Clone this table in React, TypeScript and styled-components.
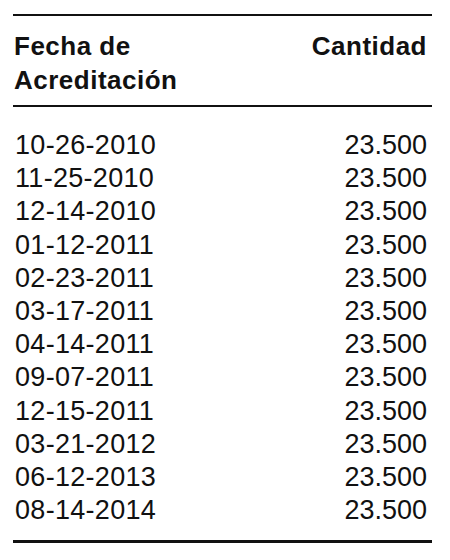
import React from "react";
import styled, { createGlobalStyle } from "styled-components";

const Global = createGlobalStyle`
  html, body { margin: 0; padding: 0; background: #fff; }
  body { font-family: "Liberation Sans", Arial, Helvetica, sans-serif; color: #111; }
`;

const Page = styled.div`
  width: 450px;
  height: 560px;
  padding: 14px 18px 0 13px;
  box-sizing: border-box;
`;

const Table = styled.div`
  border-top: 2px solid #111;
  border-bottom: 3px solid #111;
  width: 419px;
`;

const Header = styled.div`
  display: flex;
  justify-content: space-between;
  align-items: flex-start;
  padding: 13px 5px 8px 1px;
  border-bottom: 2px solid #111;
  font-weight: 700;
  font-size: 26px;
  line-height: 34px;
  letter-spacing: 0.5px;
`;

const HeadCell = styled.div<{ $right?: boolean }>`
  text-align: ${(p) => (p.$right ? "right" : "left")};
`;

const Body = styled.div`
  padding: 22px 0 13px 0;
`;

const Row = styled.div`
  display: flex;
  justify-content: space-between;
  font-size: 27px;
  line-height: 33.2px;
  padding-left: 2px;
  padding-right: 5px;
`;

const DateCell = styled.span`
  letter-spacing: 0.3px;
`;

const Amount = styled.span`
  text-align: right;
`;

const rows = [
  "10-26-2010",
  "11-25-2010",
  "12-14-2010",
  "01-12-2011",
  "02-23-2011",
  "03-17-2011",
  "04-14-2011",
  "09-07-2011",
  "12-15-2011",
  "03-21-2012",
  "06-12-2013",
  "08-14-2014",
];

export default function App() {
  return (
    <>
      <Global />
      <Page>
        <Table>
          <Header>
            <HeadCell>
              Fecha de
              <br />
              Acreditación
            </HeadCell>
            <HeadCell $right>Cantidad</HeadCell>
          </Header>
          <Body>
            {rows.map((d) => (
              <Row key={d}>
                <DateCell>{d}</DateCell>
                <Amount>23.500</Amount>
              </Row>
            ))}
          </Body>
        </Table>
      </Page>
    </>
  );
}
